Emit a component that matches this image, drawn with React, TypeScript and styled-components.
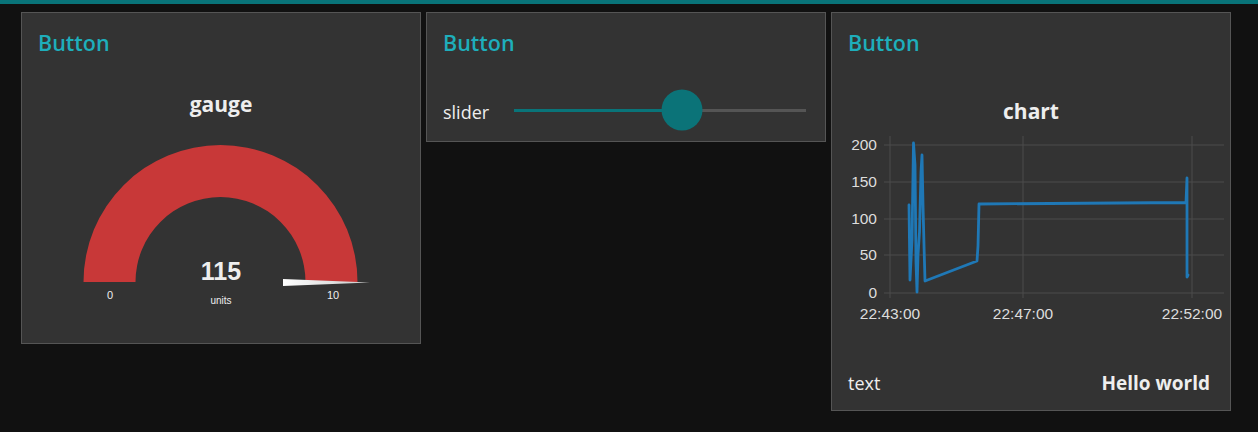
import * as React from 'react';
import styled, { createGlobalStyle } from 'styled-components';

const GlobalStyle = createGlobalStyle`
  html, body {
    margin: 0;
    padding: 0;
    background-color: #111111;
    font-family: 'Open Sans', 'Noto Sans', sans-serif;
  }
`;

const TopBar = styled.div`
  height: 4px;
  background-color: #097479;
`;

const Layout = styled.main`
  display: flex;
  align-items: flex-start;
  gap: 5px;
  padding: 8px 0 0 21px;
`;

const Card = styled.section<{ $height: number }>`
  width: 400px;
  height: ${(p) => p.$height}px;
  box-sizing: border-box;
  background-color: #333333;
  border: 1px solid #555555;
  display: flex;
  flex-direction: column;
`;

const CardTitle = styled.h2`
  margin: 0;
  height: 59px;
  flex: none;
  display: flex;
  align-items: center;
  padding: 0 0 1px 16px;
  font-size: 21.5px;
  font-weight: 600;
  color: #1eaebb;
`;

const WidgetTitle = styled.div<{ $top: number; $height: number }>`
  margin-top: ${(p) => p.$top}px;
  height: ${(p) => p.$height}px;
  flex: none;
  display: flex;
  align-items: center;
  justify-content: center;
  font-size: 21px;
  font-weight: 700;
  color: #eeeeee;
`;

const Drawing = styled.svg`
  display: block;
  flex: none;
`;

const SliderRow = styled.div`
  margin-top: 10px;
  height: 58px;
  display: flex;
  align-items: center;
  padding: 0 19px 0 16px;
`;

const SliderLabel = styled.span`
  width: 71px;
  flex: none;
  font-size: 18px;
  color: #eeeeee;
`;

const Track = styled.div`
  position: relative;
  flex: 1;
  height: 3px;
  margin-top: -4px;
  background-color: #555555;
`;

const TrackFill = styled.div`
  height: 100%;
  background-color: #097479;
`;

const Thumb = styled.div`
  position: absolute;
  top: 50%;
  width: 41px;
  height: 41px;
  border-radius: 50%;
  background-color: #0b7378;
  transform: translate(-50%, -50%);
`;

const TextRow = styled.div`
  margin-top: auto;
  height: 54px;
  display: flex;
  align-items: center;
  justify-content: space-between;
  padding: 0 20px 0 16px;
  font-size: 18px;
  color: #eeeeee;
`;

const TextValue = styled.span`
  font-weight: 700;
  font-size: 19px;
`;

const axisFont = "'Liberation Sans', Arial, sans-serif";

const Gauge: React.FC = () => {
  const cx = 220.5;
  const cy = 282;
  const ro = 137;
  const ri = 85;
  const arc = `M ${cx - ro} ${cy} A ${ro} ${ro} 0 0 1 ${cx + ro} ${cy} L ${cx + ri} ${cy} A ${ri} ${ri} 0 0 0 ${cx - ri} ${cy} Z`;
  return (
    <Drawing width={398} height={207} viewBox="22 135 398 207">
      <defs>
        <linearGradient id="needle" x1="0" x2="1" y1="0" y2="0">
          <stop offset="0" stopColor="#ffffff" />
          <stop offset="1" stopColor="#c8c8c8" />
        </linearGradient>
      </defs>
      <path d={arc} fill="#c83838" />
      <polygon points="283,279 370,282.5 283,286" fill="url(#needle)" />
      <g fontFamily={axisFont} fill="#eeeeee" textAnchor="middle">
        <text x={221} y={280} fontSize={25} fontWeight={700}>115</text>
        <text x={221} y={304} fontSize={10}>units</text>
        <text x={110} y={299} fontSize={11}>0</text>
        <text x={333} y={299} fontSize={11}>10</text>
      </g>
    </Drawing>
  );
};

const yTicks = [
  { v: '200', y: 145 },
  { v: '150', y: 182 },
  { v: '100', y: 219 },
  { v: '50', y: 255 },
  { v: '0', y: 293 },
];

const xTicks = [
  { t: '22:43:00', x: 890 },
  { t: '22:47:00', x: 1023 },
  { t: '22:52:00', x: 1192 },
];

const series = [
  [909, 205], [910, 280], [912, 240], [913.5, 143], [915, 165], [916, 262],
  [917, 292], [918, 255], [919.5, 232], [921, 172], [922, 155], [923, 205],
  [924, 245], [925, 281], [977, 261], [978, 246], [979, 204], [1186, 202.5],
  [1187, 178], [1187, 277], [1188, 275],
];

const Chart: React.FC = () => (
  <Drawing width={398} height={200} viewBox="832 129 398 200">
    {yTicks.map((t) => (
      <line key={t.v} x1={884} x2={1224} y1={t.y} y2={t.y} stroke="#4c4c4c" strokeWidth={1} />
    ))}
    {xTicks.map((t) => (
      <line key={t.t} x1={t.x} x2={t.x} y1={136} y2={298} stroke="#4c4c4c" strokeWidth={1} />
    ))}
    <g fontFamily={axisFont} fontSize={15.5} fill="#dddddd">
      {yTicks.map((t) => (
        <text key={t.v} x={877} y={t.y + 5} textAnchor="end">{t.v}</text>
      ))}
      {xTicks.map((t) => (
        <text key={t.t} x={t.x} y={319} textAnchor="middle">{t.t}</text>
      ))}
    </g>
    <polyline
      points={series.map((p) => p.join(',')).join(' ')}
      fill="none"
      stroke="#1f78b6"
      strokeWidth={2.8}
      strokeLinejoin="round"
      strokeLinecap="round"
    />
  </Drawing>
);

const Slider: React.FC<{ value: number }> = ({ value }) => (
  <SliderRow>
    <SliderLabel>slider</SliderLabel>
    <Track>
      <TrackFill style={{ width: `${value}%` }} />
      <Thumb style={{ left: `${value}%` }} />
    </Track>
  </SliderRow>
);

const App: React.FC = () => (
  <>
    <GlobalStyle />
    <TopBar />
    <Layout>
      <Card $height={332}>
        <CardTitle>Button</CardTitle>
        <WidgetTitle $top={0} $height={62}>gauge</WidgetTitle>
        <Gauge />
      </Card>
      <Card $height={130}>
        <CardTitle>Button</CardTitle>
        <Slider value={57.7} />
      </Card>
      <Card $height={399}>
        <CardTitle>Button</CardTitle>
        <WidgetTitle $top={20} $height={36}>chart</WidgetTitle>
        <Chart />
        <TextRow>
          <span>text</span>
          <TextValue>Hello world</TextValue>
        </TextRow>
      </Card>
    </Layout>
  </>
);

export default App;
